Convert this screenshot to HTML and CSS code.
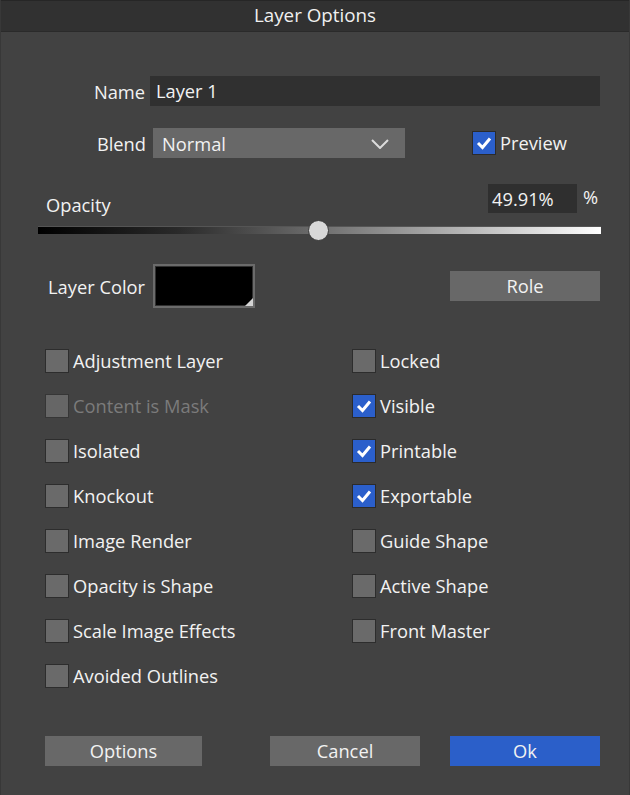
FILE: index.html
```html
<!DOCTYPE html>
<html>
<head>
<meta charset="utf-8">
<link rel="stylesheet" href="styles.css">
</head>
<body>
<div class="dialog">
  <div class="titlebar">Layer Options</div>

  <div class="row row-name">
    <label class="lbl lbl-name">Name</label>
    <div class="text-input">Layer 1</div>
  </div>

  <div class="row row-blend">
    <label class="lbl lbl-blend">Blend</label>
    <div class="select">
      <span>Normal</span>
      <svg class="chev" width="18" height="10" viewBox="0 0 18 10"><polyline points="1,1 9,9 17,1" fill="none" stroke="#dcdcdc" stroke-width="2"/></svg>
    </div>
    <div class="check-item preview">
      <span class="box checked"><svg width="22" height="22" viewBox="0 0 22 22"><polyline points="5,11 9.5,15.5 17,6.5" fill="none" stroke="#fff" stroke-width="3"/></svg></span>
      <span class="ctext">Preview</span>
    </div>
  </div>

  <div class="row row-opacity">
    <label class="lbl lbl-opacity">Opacity</label>
    <div class="value-box">49.91%</div>
    <span class="pct">%</span>
  </div>

  <div class="slider">
    <div class="track"></div>
    <div class="thumb"></div>
  </div>

  <div class="row row-color">
    <label class="lbl lbl-color">Layer Color</label>
    <div class="swatch"><span class="corner"></span></div>
    <button class="btn role">Role</button>
  </div>

  <div class="checks">
    <div class="check-item"><span class="box"></span><span class="ctext">Adjustment Layer</span></div>
    <div class="check-item"><span class="box"></span><span class="ctext">Locked</span></div>
    <div class="check-item disabled"><span class="box"></span><span class="ctext">Content is Mask</span></div>
    <div class="check-item"><span class="box checked"><svg width="22" height="22" viewBox="0 0 22 22"><polyline points="5,11 9.5,15.5 17,6.5" fill="none" stroke="#fff" stroke-width="3"/></svg></span><span class="ctext">Visible</span></div>
    <div class="check-item"><span class="box"></span><span class="ctext">Isolated</span></div>
    <div class="check-item"><span class="box checked"><svg width="22" height="22" viewBox="0 0 22 22"><polyline points="5,11 9.5,15.5 17,6.5" fill="none" stroke="#fff" stroke-width="3"/></svg></span><span class="ctext">Printable</span></div>
    <div class="check-item"><span class="box"></span><span class="ctext">Knockout</span></div>
    <div class="check-item"><span class="box checked"><svg width="22" height="22" viewBox="0 0 22 22"><polyline points="5,11 9.5,15.5 17,6.5" fill="none" stroke="#fff" stroke-width="3"/></svg></span><span class="ctext">Exportable</span></div>
    <div class="check-item"><span class="box"></span><span class="ctext">Image Render</span></div>
    <div class="check-item"><span class="box"></span><span class="ctext">Guide Shape</span></div>
    <div class="check-item"><span class="box"></span><span class="ctext">Opacity is Shape</span></div>
    <div class="check-item"><span class="box"></span><span class="ctext">Active Shape</span></div>
    <div class="check-item"><span class="box"></span><span class="ctext">Scale Image Effects</span></div>
    <div class="check-item"><span class="box"></span><span class="ctext">Front Master</span></div>
    <div class="check-item"><span class="box"></span><span class="ctext">Avoided Outlines</span></div>
  </div>

  <div class="row row-buttons">
    <button class="btn options">Options</button>
    <button class="btn cancel">Cancel</button>
    <button class="btn ok">Ok</button>
  </div>
</div>
</body>
</html>
```

FILE: styles.css
```css
html, body {
  margin: 0;
  padding: 0;
  background: #424242;
}
.dialog {
  width: 630px;
  height: 795px;
  box-sizing: border-box;
  background: #424242;
  border-left: 1px solid #383838;
  border-right: 1px solid #383838;
  font-family: "Open Sans", "Noto Sans", sans-serif;
  font-size: 18.3px;
  color: #f2f2f2;
  overflow: hidden;
}
.titlebar {
  height: 30px;
  line-height: 28px;
  background: #313131;
  border-top: 1px solid #262626;
  border-bottom: 1px solid #2a2a2a;
  text-align: center;
  font-size: 18.8px;
  color: #f0f0f0;
  margin: 0 -1px;
}
.row {
  display: flex;
  align-items: center;
}
.lbl {
  text-align: right;
  white-space: nowrap;
}
.row-name {
  margin-top: 44px;
  height: 30px;
}
.lbl-name { width: 144px; }
.text-input {
  margin-left: 5px;
  width: 444px;
  height: 30px;
  line-height: 30px;
  padding-left: 6px;
  background: #303030;
}
.row-blend {
  margin-top: 22px;
  height: 30px;
}
.lbl-blend { width: 145px; }
.select {
  margin-left: 7px;
  width: 252px;
  height: 30px;
  box-sizing: border-box;
  padding: 0 16px 0 9px;
  background: #686868;
  display: flex;
  align-items: center;
  justify-content: space-between;
}
.chev { margin-top: 1px; }
.check-item {
  display: flex;
  align-items: center;
  height: 24px;
  white-space: nowrap;
}
.preview { margin-left: 67px; }
.box {
  width: 24px;
  height: 24px;
  box-sizing: border-box;
  background: #6a6a6a;
  border: 1px solid #2d2d2d;
  display: flex;
  align-items: center;
  justify-content: center;
  flex: none;
}
.box.checked {
  background: #2b5fcb;
  border-color: #2b2b2b;
}
.ctext {
  margin-left: 4px;
  margin-top: -2px;
}
.disabled .ctext { color: #7b7b7b; }
.disabled .box { background: #666; border-color: #363636; }

.row-opacity {
  margin-top: 26px;
  height: 29px;
  align-items: flex-start;
}
.lbl-opacity {
  text-align: left;
  width: 487px;
  padding-left: 45px;
  box-sizing: border-box;
  margin-top: 9px;
  line-height: 24px;
}
.value-box {
  width: 89px;
  height: 29px;
  line-height: 29px;
  box-sizing: border-box;
  padding-left: 4px;
  background: #2f2f2f;
}
.pct {
  margin-left: 6px;
  line-height: 24px;
  margin-top: 1px;
}
.slider {
  position: relative;
  margin: 14px 0 0 37px;
  width: 563px;
  height: 7px;
}
.track {
  height: 7px;
  background: linear-gradient(to right, #000 0%, #2a2a2a 25%, #6e6e6e 50%, #b4b4b4 75%, #fff 100%);
  box-shadow: 0 -1px 0 #555;
}
.thumb {
  position: absolute;
  left: 270px;
  top: -7px;
  width: 19px;
  height: 19px;
  border-radius: 50%;
  background: #d8d8d8;
  border: 1px solid #3a3a3a;
}
.row-color {
  margin-top: 30px;
  height: 44px;
}
.lbl-color { width: 144px; }
.swatch {
  position: relative;
  margin-left: 8px;
  width: 102px;
  height: 44px;
  box-sizing: border-box;
  background: #000;
  border: 2px solid #6b6b6b;
  box-shadow: inset 0 0 0 1px #303030;
}
.corner {
  position: absolute;
  right: 0;
  bottom: 0;
  width: 0;
  height: 0;
  border-left: 8px solid transparent;
  border-bottom: 8px solid #d4d4d4;
}
.btn {
  font-family: inherit;
  font-size: 18.3px;
  color: #f2f2f2;
  background: #686868;
  border: none;
  height: 30px;
  padding: 0 0 2px;
  margin: 0;
}
.role {
  width: 150px;
  margin-left: 195px;
}
.checks {
  margin-top: 41px;
  padding-left: 44px;
  display: grid;
  grid-template-columns: 307px 1fr;
  row-gap: 21px;
}
.row-buttons {
  margin-top: 48px;
  height: 30px;
}
.options { width: 157px; margin-left: 44px; }
.cancel { width: 150px; margin-left: 68px; }
.ok { width: 150px; margin-left: 30px; background: #2b5fc9; }
```
